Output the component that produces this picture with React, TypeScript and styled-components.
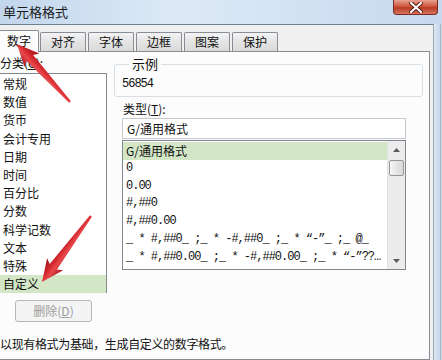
import styled, { createGlobalStyle } from 'styled-components';

const GlobalStyle = createGlobalStyle`
  html, body {
    margin: 0;
    padding: 0;
  }
  body {
    width: 442px;
    height: 360px;
    overflow: hidden;
    font-family: "Noto Sans CJK SC", "DejaVu Sans", sans-serif;
    color: #111;
    background: #d3e2f1;
  }
`;

const Window = styled.div`
  position: relative;
  width: 442px;
  height: 360px;
  display: flex;
  flex-direction: column;
  overflow: hidden;
  background: #cddcee;
`;

const TitleBar = styled.div`
  height: 24px;
  flex-shrink: 0;
  display: flex;
  justify-content: space-between;
  align-items: flex-start;
  padding: 0 4px 0 3px;
  background: linear-gradient(to right, #c2d6ec, #dde9f6 40%, #d2e1f2 70%, #c6d9ee);
`;

const Title = styled.span`
  font-size: 13px;
  line-height: 24px;
  color: #1a1a1a;
`;

const CloseButton = styled.div`
  width: 45px;
  height: 15px;
  box-sizing: border-box;
  border: 1px solid #7a2c22;
  border-top: none;
  border-radius: 0 0 4px 4px;
  background: linear-gradient(to bottom, #e6a190, #d0583f 45%, #b93b25 55%, #d6765e);
  display: flex;
  align-items: center;
  justify-content: center;
`;

const Main = styled.div`
  flex: 1;
  display: flex;
  min-height: 0;
`;

const Body = styled.div`
  flex: 1;
  display: flex;
  flex-direction: column;
  background: #f0f0f0;
  border-top: 1px solid #6f7f8f;
  border-right: 1px solid #9aa8b6;
  padding-right: 3px;
`;

const FrameEdge = styled.div`
  width: 8px;
  flex-shrink: 0;
  background: linear-gradient(to right, #dbe7f4, #c7d8ec 70%, #a9b6c4 80%, #d8e5f3);
`;

const TabRow = styled.div`
  height: 26px;
  flex-shrink: 0;
  display: flex;
  align-items: flex-end;
  gap: 2px;
`;

const Tab = styled.div<{ $active?: boolean }>`
  position: relative;
  z-index: ${({ $active }) => ($active ? 1 : 0)};
  box-sizing: border-box;
  width: ${({ $active }) => ($active ? 40 : 46)}px;
  height: ${({ $active }) => ($active ? 22 : 19)}px;
  margin: ${({ $active }) => ($active ? '0 -1px -1px -1px' : '0')};
  border: 1px solid #898c95;
  border-bottom: none;
  border-radius: 2px 2px 0 0;
  background: ${({ $active }) =>
    $active ? '#fcfcfc' : 'linear-gradient(to bottom, #f3f3f3, #e4e4e4 50%, #d9d9d9)'};
  font-size: 12px;
  line-height: ${({ $active }) => ($active ? 19 : 18)}px;
  text-align: center;
  color: #111;
`;

const Panel = styled.div`
  flex: 1;
  display: flex;
  flex-direction: column;
  border: 1px solid #898c95;
  border-left: none;
  background: #fcfcfc;
`;

const Columns = styled.div`
  display: flex;
`;

const LeftCol = styled.div`
  width: 108px;
  flex-shrink: 0;
  margin-left: -1px;
  display: flex;
  flex-direction: column;
`;

const RightCol = styled.div`
  flex: 1;
  display: flex;
  flex-direction: column;
  padding: 0 6px 0 7px;
`;

const FieldLabel = styled.div<{ $indent?: number }>`
  font-size: 12px;
  line-height: 18px;
  padding-left: ${({ $indent }) => $indent ?? 1}px;
  color: #111;
  u {
    text-decoration: underline;
  }
`;

const CategoryLabel = styled(FieldLabel)`
  height: 21px;
  line-height: 21px;
`;

const CategoryList = styled.div`
  box-sizing: border-box;
  height: 220px;
  border: 1px solid #828790;
  background: #fff;
  padding-top: 1px;
`;

const CategoryItem = styled.div<{ $selected?: boolean }>`
  height: 18.2px;
  line-height: 18.2px;
  font-size: 12px;
  padding-left: 3px;
  background: ${({ $selected }) => ($selected ? '#d3e6c6' : 'transparent')};
  color: #111;
`;

const DeleteButton = styled.div`
  box-sizing: border-box;
  width: 77px;
  height: 22px;
  margin: 7px 0 0 16px;
  border: 1px solid #b4b7ba;
  border-radius: 3px;
  background: #f4f4f4;
  color: #9c9c9c;
  font-size: 12px;
  line-height: 20px;
  text-align: center;
`;

const GroupBox = styled.fieldset`
  margin: 4px 0 0 0;
  padding: 5px 7px 5px 7px;
  min-inline-size: 0;
  border: 1px solid #d5dfe5;
  border-radius: 3px;
`;

const Legend = styled.legend`
  margin-left: 7px;
  padding: 0 3px;
  font-size: 13px;
  line-height: 16px;
  color: #111;
`;

const MonoText = styled.div`
  font-family: "Liberation Mono", "Noto Sans CJK SC", monospace;
  font-size: 12px;
  letter-spacing: -1px;
  line-height: 14px;
  color: #111;
`;

const TypeLabel = styled(FieldLabel)`
  margin: 3px 0 0 8px;
`;

const TypeInput = styled.div`
  box-sizing: border-box;
  width: 284px;
  height: 21px;
  margin-left: 8px;
  border: 1px solid #c5c8cc;
  background: #fff;
  font-size: 12px;
  line-height: 19px;
  padding-left: 4px;
  color: #111;
`;

const FormatList = styled.div`
  box-sizing: border-box;
  width: 284px;
  height: 130px;
  margin: 1px 0 0 8px;
  border: 1px solid #828790;
  background: #fff;
  display: flex;
`;

const FormatItems = styled.div`
  flex: 1;
  min-width: 0;
  padding-top: 1px;
`;

const FormatItem = styled.div<{ $selected?: boolean; $cjk?: boolean }>`
  height: 17.8px;
  line-height: 17.8px;
  padding-left: 3px;
  white-space: pre;
  background: ${({ $selected }) => ($selected ? '#d3e6c6' : 'transparent')};
  font-family: ${({ $cjk }) =>
    $cjk ? '"Noto Sans CJK SC", sans-serif' : '"Liberation Mono", "Noto Sans CJK SC", monospace'};
  font-size: 12px;
  letter-spacing: ${({ $cjk }) => ($cjk ? 0 : -1)}px;
  color: #111;
`;

const ScrollBar = styled.div`
  width: 17px;
  flex-shrink: 0;
  display: flex;
  flex-direction: column;
  background: #ececec;
  border-left: 1px solid #e2e2e2;
`;

const ScrollArrow = styled.div`
  height: 17px;
  display: flex;
  align-items: center;
  justify-content: center;
`;

const ScrollTrack = styled.div`
  flex: 1;
  padding-top: 2px;
`;

const Thumb = styled.div`
  box-sizing: border-box;
  width: 15px;
  height: 16px;
  margin-left: 1px;
  border: 1px solid #979797;
  border-radius: 2px;
  background: linear-gradient(to right, #f6f6f6, #e6e6e6 50%, #d8d8d8);
`;

const Hint = styled.div`
  margin-top: 14px;
  font-size: 12px;
  line-height: 16px;
  letter-spacing: -0.35px;
  color: #111;
`;

const Annotations = styled.svg`
  position: absolute;
  left: 0;
  top: 0;
  z-index: 5;
  pointer-events: none;
`;

const tabs = ['数字', '对齐', '字体', '边框', '图案', '保护'];

const categories = [
  '常规', '数值', '货币', '会计专用', '日期', '时间',
  '百分比', '分数', '科学记数', '文本', '特殊', '自定义',
];

// the last entry is shown already shortened, as the list control does
const formats = [
  'G/通用格式',
  '0',
  '0.00',
  '#,##0',
  '#,##0.00',
  '_ * #,##0_ ;_ * -#,##0_ ;_ * “-”_ ;_ @_',
  '_ * #,##0.00_ ;_ * -#,##0.00_ ;_ * “-”??…',
];

type ArrowSpec = { x: number; y: number; tipX: number; tipY: number };

const arrows: ArrowSpec[] = [
  { x: 70, y: 102, tipX: 17, tipY: 44 },
  { x: 91, y: 216, tipX: 42, tipY: 282 },
];

function Arrow({ x, y, tipX, tipY }: ArrowSpec) {
  const dx = tipX - x;
  const dy = tipY - y;
  const len = Math.sqrt(dx * dx + dy * dy);
  const angle = (Math.atan2(dy, dx) * 180) / Math.PI;
  const pts = [
    [0, -1.2], [len - 19, -4.5], [len - 22, -10], [len, 0],
    [len - 22, 10], [len - 19, 4.5], [0, 1.2],
  ].map((p) => p.join(',')).join(' ');
  return (
    <g transform={`translate(${x} ${y}) rotate(${angle})`}>
      <polygon points={pts} fill="url(#redArrow)" />
    </g>
  );
}

function Triangle({ up }: { up?: boolean }) {
  return (
    <svg width="7" height="4" viewBox="0 0 7 4">
      <path d={up ? 'M0 4 L3.5 0 L7 4 Z' : 'M0 0 L3.5 4 L7 0 Z'} fill="#5a5a5a" />
    </svg>
  );
}

export default function App() {
  return (
    <>
      <GlobalStyle />
      <Window>
        <TitleBar>
          <Title>单元格格式</Title>
          <CloseButton>
            <svg width="14" height="11" viewBox="0 0 14 11">
              <path d="M2 1 L12 10 M12 1 L2 10" stroke="#5b1a10" strokeWidth="4" strokeLinecap="round" />
              <path d="M2 1 L12 10 M12 1 L2 10" stroke="#fff" strokeWidth="2.2" strokeLinecap="round" />
            </svg>
          </CloseButton>
        </TitleBar>
        <Main>
          <Body>
            <TabRow>
              {tabs.map((t, i) => (
                <Tab key={t} $active={i === 0}>{t}</Tab>
              ))}
            </TabRow>
            <Panel>
              <Columns>
                <LeftCol>
                  <CategoryLabel $indent={1}>分类(<u>C</u>):</CategoryLabel>
                  <CategoryList>
                    {categories.map((c) => (
                      <CategoryItem key={c} $selected={c === '自定义'}>{c}</CategoryItem>
                    ))}
                  </CategoryList>
                  <DeleteButton>删除(<u>D</u>)</DeleteButton>
                </LeftCol>
                <RightCol>
                  <GroupBox>
                    <Legend>示例</Legend>
                    <MonoText>56854</MonoText>
                  </GroupBox>
                  <TypeLabel>类型(<u>T</u>):</TypeLabel>
                  <TypeInput>G/通用格式</TypeInput>
                  <FormatList>
                    <FormatItems>
                      {formats.map((f, i) => (
                        <FormatItem key={f} $selected={i === 0} $cjk={i === 0}>{f}</FormatItem>
                      ))}
                    </FormatItems>
                    <ScrollBar>
                      <ScrollArrow><Triangle up /></ScrollArrow>
                      <ScrollTrack><Thumb /></ScrollTrack>
                      <ScrollArrow><Triangle /></ScrollArrow>
                    </ScrollBar>
                  </FormatList>
                </RightCol>
              </Columns>
              <Hint>以现有格式为基础，生成自定义的数字格式。</Hint>
            </Panel>
          </Body>
          <FrameEdge />
        </Main>
        <Annotations width="442" height="360" viewBox="0 0 442 360">
          <defs>
            <linearGradient id="redArrow" x1="0" y1="-10" x2="0" y2="10" gradientUnits="userSpaceOnUse">
              <stop offset="0" stopColor="#a3141a" />
              <stop offset="0.4" stopColor="#e9484c" />
              <stop offset="0.6" stopColor="#d42a2f" />
              <stop offset="1" stopColor="#9a1216" />
            </linearGradient>
          </defs>
          {arrows.map((a) => (
            <Arrow key={`${a.x}-${a.y}`} {...a} />
          ))}
        </Annotations>
      </Window>
    </>
  );
}
